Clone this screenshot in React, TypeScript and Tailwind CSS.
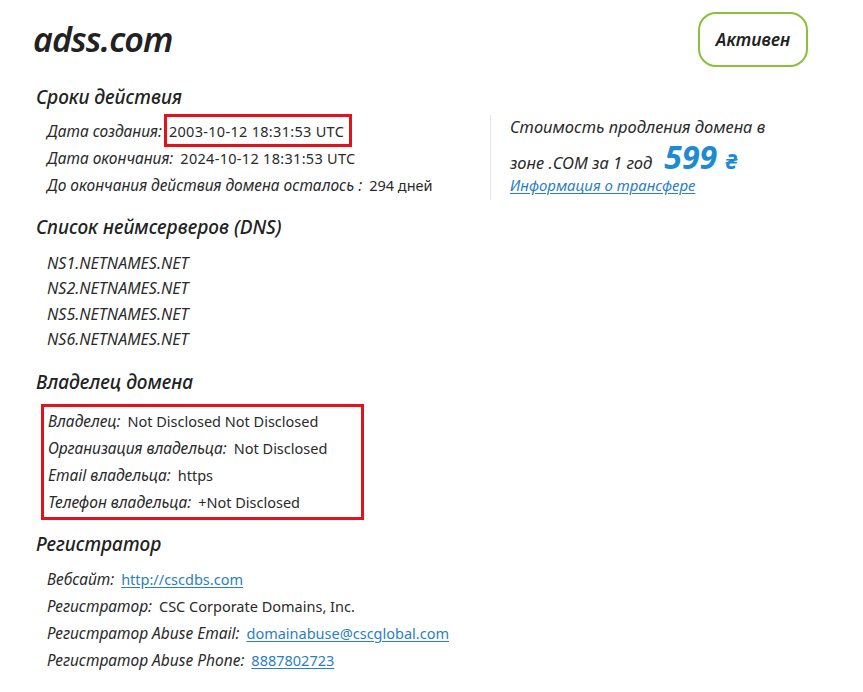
import React from "react";

const Row = ({ label, children }: { label: string; children: React.ReactNode }) => (
  <div className="flex items-center h-[27px] whitespace-nowrap">
    <span className="italic text-[15.5px] text-[#2a2a2a]">{label}</span>
    <span className="ml-[7px] text-[14.5px] text-[#2a2a2a]">{children}</span>
  </div>
);

const Link = ({ children }: { children: React.ReactNode }) => (
  <a href="#" className="text-[#2a7fc0] underline underline-offset-2">
    {children}
  </a>
);

const Heading = ({ children }: { children: React.ReactNode }) => (
  <h2 className="italic text-[19px] leading-[24px] text-[#222] font-medium">{children}</h2>
);

export default function App() {
  return (
    <div
      className="w-[863px] h-[692px] bg-white overflow-hidden"
      style={{ fontFamily: '"Noto Sans", "Open Sans", sans-serif' }}
    >
      <div className="flex items-center justify-between h-[55px] mt-[12px] pl-[33px] pr-[55px]">
        <h1 className="italic font-semibold text-[34px] text-[#222] tracking-tight">adss.com</h1>
        <div className="flex items-center justify-center w-[110px] h-[55px] rounded-[18px] border-2 border-[#8cbf3a] italic font-semibold text-[17.5px] text-[#222]">
          Активен
        </div>
      </div>

      <div className="pl-[36px]">
        <div className="mt-[18px]">
          <Heading>Сроки действия</Heading>
          <div className="flex mt-[9px]">
            <div className="w-[454px] pl-[11px]">
              <Row label="Дата создания:">
                <span className="relative tracking-[0.3px]">
                  2003-10-12 18:31:53 UTC
                  <span className="absolute -left-[5px] -right-[8px] -top-[7px] -bottom-[6px] border-[3px] border-[#e3131b]" />
                </span>
              </Row>
              <Row label="Дата окончания:">
                <span className="tracking-[0.3px]">2024-10-12 18:31:53 UTC</span>
              </Row>
              <Row label="До окончания действия домена осталось :">294 дней</Row>
            </div>
            <div className="-mt-[3px] h-[85px] border-l border-[#e6e6e6] pl-[19px] pt-[1px] italic text-[16.5px] text-[#2a2a2a]">
              <div className="leading-[22px]">Стоимость продления домена в</div>
              <div className="flex items-baseline h-[35px] pt-[3px] leading-none">
                <span>зоне .COM за 1 год</span>
                <span className="ml-[12px] text-[32px] font-bold text-[#1d8ad2]">599</span>
                <span className="ml-[8px] text-[21px] font-bold text-[#1d8ad2]">₴</span>
              </div>
              <div className="text-[15px] leading-[24px]">
                <Link>Информация о трансфере</Link>
              </div>
            </div>
          </div>
        </div>

        <div className="mt-[15px]">
          <Heading>Список неймсерверов (DNS)</Heading>
          <div className="mt-[11px] pl-[11px] italic text-[16px] text-[#2a2a2a]">
            {["NS1.NETNAMES.NET", "NS2.NETNAMES.NET", "NS5.NETNAMES.NET", "NS6.NETNAMES.NET"].map((ns) => (
              <div key={ns} className="h-[25.5px] flex items-center">
                {ns}
              </div>
            ))}
          </div>
        </div>

        <div className="mt-[18px]">
          <Heading>Владелец домена</Heading>
          <div className="mt-[10px] ml-[5px] w-[323px] border-[3px] border-[#e3131b] pl-[4px] py-[1px]">
            <Row label="Владелец:">Not Disclosed Not Disclosed</Row>
            <Row label="Организация владельца:">Not Disclosed</Row>
            <Row label="Email владельца:">https</Row>
            <Row label="Телефон владельца:">+Not Disclosed</Row>
          </div>
        </div>

        <div className="mt-[12px]">
          <Heading>Регистратор</Heading>
          <div className="mt-[10px] pl-[11px]">
            <Row label="Вебсайт:">
              <Link>http://cscdbs.com</Link>
            </Row>
            <Row label="Регистратор:">CSC Corporate Domains, Inc.</Row>
            <Row label="Регистратор Abuse Email:">
              <Link>domainabuse@cscglobal.com</Link>
            </Row>
            <Row label="Регистратор Abuse Phone:">
              <Link>8887802723</Link>
            </Row>
          </div>
        </div>
      </div>
    </div>
  );
}
